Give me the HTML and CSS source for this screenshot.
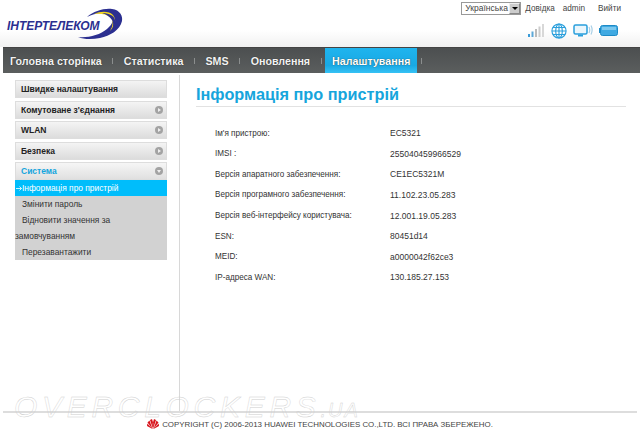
FILE: index.html
```html
<!DOCTYPE html>
<html lang="uk">
<head>
<meta charset="utf-8">
<title>Інформація про пристрій</title>
<link rel="stylesheet" href="styles.css">
</head>
<body>
<div class="page">
  <header class="top">
    <div class="logo">
      <span class="logo-text">ІНТЕРТЕЛЕКОМ</span>
      <svg class="swoosh" width="50" height="32" viewBox="0 0 50 32">
        <path d="M13 9C20 3 30 0 38 1c8 1 11 7 10 12-2 9-12 15-22 17-8 1.500-16 1.500-22-1 10 1 22-2 29-8 6-5 8-11 3-14C30 4 20 5 13 9Z" fill="#2b2f90"/>
        <path d="M20 6c7-3 15-3 19 1 4 5 2 11-3 16 3-5 4-11 0-14-4-3-10-4-16-3Z" fill="#f3d820"/>
        <path d="M28 5c6 0 12 2 13 7 1 4-1 7-3 10 1-3 2-7 0-10-2-3-6-6-10-7Z" fill="#2b2f90"/>
      </svg>
    </div>
    <div class="top-right">
      <div class="links">
        <div class="lang"><span class="lang-val">Українська</span><span class="lang-btn"><i class="arrow"></i></span></div>
        <a class="link">Довідка</a>
        <a class="link">admin</a>
        <a class="link">Вийти</a>
      </div>
      <div class="status">
        <svg width="17" height="13" viewBox="0 0 17 13"><rect x="0" y="10" width="2" height="3" fill="#3a9bd8"/><rect x="3.500" y="7.500" width="2" height="5.500" fill="#5ca8d8"/><rect x="7" y="5" width="2" height="8" fill="#bbb"/><rect x="10.500" y="2.500" width="2" height="10.500" fill="#ccc"/><rect x="14" y="0" width="2" height="13" fill="#d8d8d8"/></svg>
        <svg width="16" height="16" viewBox="0 0 17 17" fill="none" stroke="#2a9fdc" stroke-width="1.200"><circle cx="8.500" cy="8.500" r="7.500"/><ellipse cx="8.500" cy="8.500" rx="3.500" ry="7.500"/><path d="M8.500 1v15M1 8.500h15M2 4.800h13M2 12.200h13"/></svg>
        <svg width="20" height="14" viewBox="0 0 20 14"><rect x="1" y="1" width="13" height="9" rx="1.500" fill="#eaf6fc" stroke="#2a9fdc" stroke-width="1.500"/><rect x="5" y="10.500" width="5" height="2" fill="#2a9fdc"/><path d="M16 3c1 2 1 4 0 6M18 1.500c1.500 3 1.500 6 0 9" fill="none" stroke="#a8cfe6" stroke-width="1.200"/></svg>
        <svg width="19" height="11" viewBox="0 0 19 11"><rect x="1.500" y="0.500" width="17" height="10" rx="2" fill="#3fa9e2" stroke="#1d8ac6"/><rect x="3" y="2" width="14" height="3" fill="#7cc8ee"/><rect x="0" y="3" width="1.500" height="5" fill="#1d8ac6"/></svg>
      </div>
    </div>
  </header>
  <nav class="nav">
    <a class="nav-item">Головна сторінка</a><i class="sep"></i>
    <a class="nav-item">Статистика</a><i class="sep"></i>
    <a class="nav-item">SMS</a><i class="sep"></i>
    <a class="nav-item">Оновлення</a><i class="sep"></i>
    <a class="nav-item active">Налаштування</a><i class="sep"></i>
  </nav>
  <div class="main">
    <aside class="side">
      <div class="menu-head">Швидке налаштування</div>
      <div class="menu-head">Комутоване з'єднання<i class="knob"><b class="tri-r"></b></i></div>
      <div class="menu-head">WLAN<i class="knob"><b class="tri-r"></b></i></div>
      <div class="menu-head">Безпека<i class="knob"><b class="tri-r"></b></i></div>
      <div class="menu-head open">Система<i class="knob"><b class="tri-d"></b></i></div>
      <ul class="sub">
        <li class="sub-item current"><svg class="to" width="6" height="5" viewBox="0 0 6 5" fill="none" stroke="#fff" stroke-width=".8"><path d="M0 2.500h5.500M3.500.5l2 2-2 2"/></svg>Інформація про пристрій</li>
        <li class="sub-item">Змінити пароль</li>
        <li class="sub-item wrap"><span class="in">Відновити значення за</span><br>замовчуванням</li>
        <li class="sub-item">Перезавантажити</li>
      </ul>
    </aside>
    <section class="content">
      <h1 class="title">Інформація про пристрій</h1>
      <dl class="info">
        <div class="row"><dt>Ім'я пристрою:</dt><dd>EC5321</dd></div>
        <div class="row"><dt>IMSI :</dt><dd>255040459966529</dd></div>
        <div class="row"><dt>Версія апаратного забезпечення:</dt><dd>CE1EC5321M</dd></div>
        <div class="row"><dt>Версія програмного забезпечення:</dt><dd>11.102.23.05.283</dd></div>
        <div class="row"><dt>Версія веб-інтерфейсу користувача:</dt><dd>12.001.19.05.283</dd></div>
        <div class="row"><dt>ESN:</dt><dd>80451d14</dd></div>
        <div class="row"><dt>MEID:</dt><dd>a0000042f62ce3</dd></div>
        <div class="row"><dt>IP-адреса WAN:</dt><dd>130.185.27.153</dd></div>
      </dl>
    </section>
  </div>
  <footer class="foot">
    <svg class="hw" width="12" height="10" viewBox="0 0 12 10"><path d="M6 10 3 1 5 0l1.200 4zM6 10 9 1 7 0 5.800 4zM5.500 10 .5 3.500 2.500 1.500zM6.500 10l5-6.500-2-2zM5.500 10 0 7l.3-2.500zM6.500 10 12 7l-.3-2.500z" fill="#d8141c"/></svg>
    <span>COPYRIGHT (C) 2006-2013 HUAWEI TECHNOLOGIES CO.,LTD. ВСІ ПРАВА ЗБЕРЕЖЕНО.</span>
  </footer>
  <div class="mark">OVERCLOCKERS<span class="mark-ua">.UA</span></div>
</div>
</body>
</html>
```

FILE: styles.css
```css
* { box-sizing: border-box; }
html, body { margin: 0; padding: 0; background: #fff; }
body { font-family: "Liberation Sans", Arial, sans-serif; color: #333; }
.page { position: relative; width: 640px; height: 434px; overflow: hidden; }

.top {
  height: 47px;
  display: flex;
  justify-content: space-between;
  background: linear-gradient(#fff 0, #fff 30px, #f1f1f1 47px);
}
.logo { position: relative; display: flex; align-items: flex-start; padding: 19px 0 0 7px; width: 140px; }
.logo-text { font: italic bold 12px "Liberation Sans", sans-serif; color: #2b2f90; letter-spacing: -.05px; }
.swoosh { position: absolute; left: 74px; top: 8px; }
.top-right { display: flex; flex-direction: column; align-items: flex-end; padding: 1px 19px 0 0; }
.links { display: flex; align-items: center; height: 14px; font-size: 8.200px; color: #444; }
.lang { display: flex; width: 60px; height: 13px; border: 1px solid #999; background: #fff; margin-right: 4px; align-items: center; font-size: 8.500px; }
.lang-val { flex: 1; padding-left: 3px; }
.lang-btn { width: 11px; height: 11px; background: #ccc; border: 1px solid #888; border-top-color: #eee; border-left-color: #eee; display: flex; align-items: center; justify-content: center; }
.arrow { border: 3px solid transparent; border-top: 3px solid #000; border-bottom: 0; }
.link + .link { margin-left: 8px; }
.links .link:last-child { margin-left: 13px; }
.status { display: flex; align-items: center; gap: 6px; margin-top: 7px; padding-right: 3px; height: 17px; }

.nav {
  margin-left: 3px;
  height: 26px;
  display: flex;
  align-items: center;
  background: linear-gradient(#4c4f50, #5b5e5e);
  border-top: 1px solid #444;
}
.nav-item {
  height: 100%;
  display: flex;
  align-items: center;
  padding: 0 7px;
  color: #f2f2f2;
  font-size: 10.700px;
  font-weight: bold;
  text-shadow: 0 0 1px #222;
}
.nav-item.active { background: linear-gradient(#1fb4ee, #19a9e4 70%, #36c2f5); color: #fff; }
.sep { width: 1px; height: 6px; background: #8b8e8e; margin: 0 3.500px; }

.main { display: flex; height: 338px; }
.side { width: 180px; border-right: 1px solid #d8d8d8; padding: 5px 12px 0 15px; margin-top: 2px; }
.menu-head {
  position: relative;
  height: 18px;
  margin-bottom: 2.600px;
  padding-left: 5px;
  line-height: 16px;
  font-size: 8.500px;
  font-weight: bold;
  color: #222;
  border: 1px solid #ddd;
  background: linear-gradient(#f4f4f4, #dcdcdc);
}
.menu-head.open { margin-bottom: 0; color: #14a5dd; background: linear-gradient(#f6f6f6, #e0e0e0); }
.knob { position: absolute; right: 3px; top: 4px; width: 8px; height: 8px; border-radius: 50%; background: #a3a3a3; display: flex; align-items: center; justify-content: center; }
.tri-r { border: 2.500px solid transparent; border-left: 3px solid #eee; border-right: 0; }
.tri-d { border: 2.500px solid transparent; border-top: 3px solid #eee; border-bottom: 0; }
.sub { list-style: none; margin: 0; padding: 0; background: #d2d2d2; }
.sub-item { height: 16px; line-height: 16px; font-size: 8.400px; color: #333; padding-left: 7px; }
.sub-item.current { background: #00bdfb; color: #fff; padding-left: 1px; }
.to { margin-right: 0; }
.sub-item.wrap { height: 32px; padding-left: 0; }
.sub-item .in { padding-left: 7px; }

.content { flex: 1; padding: 12px 14px 0 16px; }
.title { margin: 0; padding-bottom: 2px; font-size: 16.300px; font-weight: bold; line-height: 19px; color: #16a5dc; border-bottom: 1px solid #e2e2e2; }
.info { margin: 16px 0 0 19px; }
.row { display: flex; height: 20.570px; align-items: center; font-size: 8.500px; color: #333; }
.row dt { width: 175px; font-size: 8.150px; }
.row dd { margin: 0; }

.foot {
  margin: 0 3px;
  height: 23px;
  border-top: 2px solid #ddd;
  display: flex;
  align-items: center;
  justify-content: center;
  gap: 3px;
  font-size: 7.900px;
  color: #444;
  padding: 1px 0 0 0;
}
.hw { flex: none; }
.mark {
  position: absolute;
  left: 14px;
  top: 396px;
  font: italic 30px/22px "Liberation Sans", sans-serif;
  letter-spacing: 4.700px;
  color: transparent;
  -webkit-text-stroke: .4px #cfcfcf;
  white-space: nowrap;
}
.mark-ua { font-size: 20px; letter-spacing: 2px; }
```
